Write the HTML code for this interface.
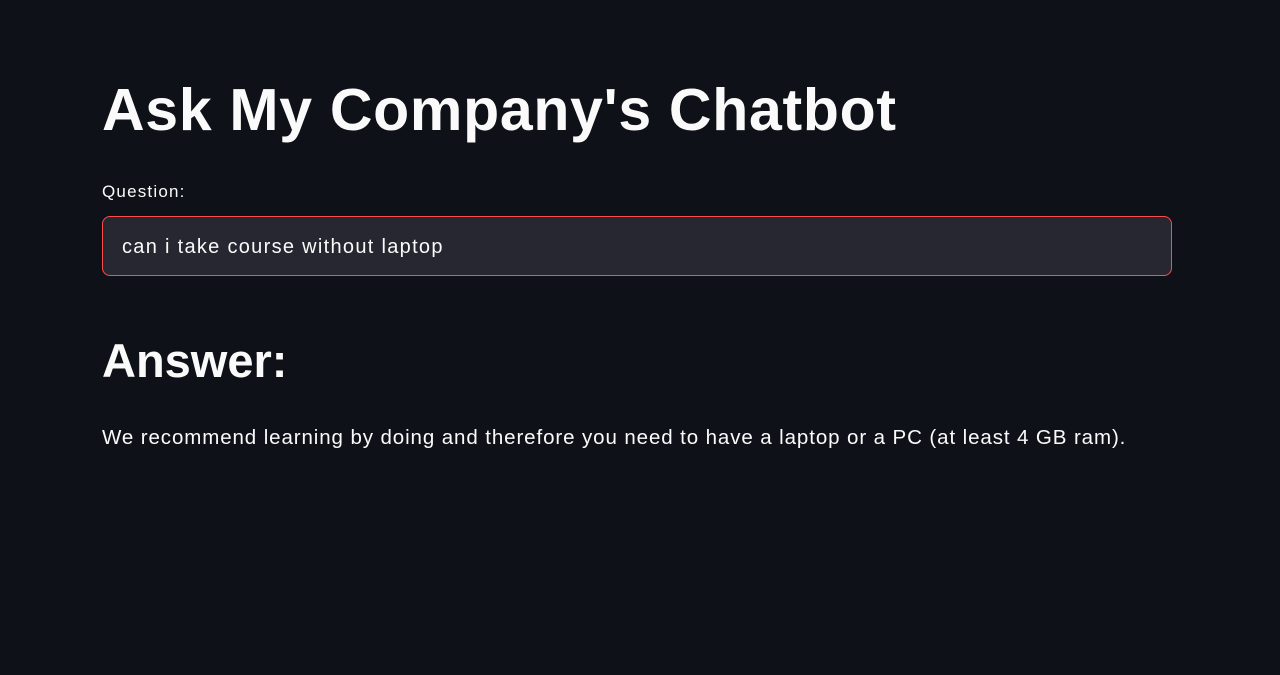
<!DOCTYPE html>
<html><head><meta charset="utf-8"><style>
html,body{margin:0;padding:0;background:#0e1117;width:1280px;height:675px;overflow:hidden;font-family:"Liberation Sans",sans-serif;color:#fafafa}
.wrap{position:absolute;left:102px;top:0;width:1070px}
h1{position:absolute;top:76px;left:0;margin:0;font-size:59px;font-weight:700;white-space:nowrap;letter-spacing:0.7px}
.lbl{position:absolute;top:182px;left:0;font-size:17px;white-space:nowrap;letter-spacing:1.2px}
.inp{position:absolute;top:216px;left:0;width:1070px;height:60px;background:#262730;border:1px solid #ff4b4b;border-radius:8px;box-sizing:border-box}
.inp span{position:absolute;left:19px;top:19px;font-size:20px;white-space:nowrap;letter-spacing:1.3px}
h2{position:absolute;top:333px;left:0;margin:0;font-size:47px;font-weight:700;white-space:nowrap}
.ans{position:absolute;top:426px;left:0;font-size:20.5px;white-space:nowrap;letter-spacing:0.9px}
</style></head><body>
<div class="wrap">
<h1>Ask My Company's Chatbot</h1>
<div class="lbl">Question:</div>
<div class="inp"><span>can i take course without laptop</span></div>
<h2>Answer:</h2>
<div class="ans">We recommend learning by doing and therefore you need to have a laptop or a PC (at least 4 GB ram).</div>
</div>
</body></html>
